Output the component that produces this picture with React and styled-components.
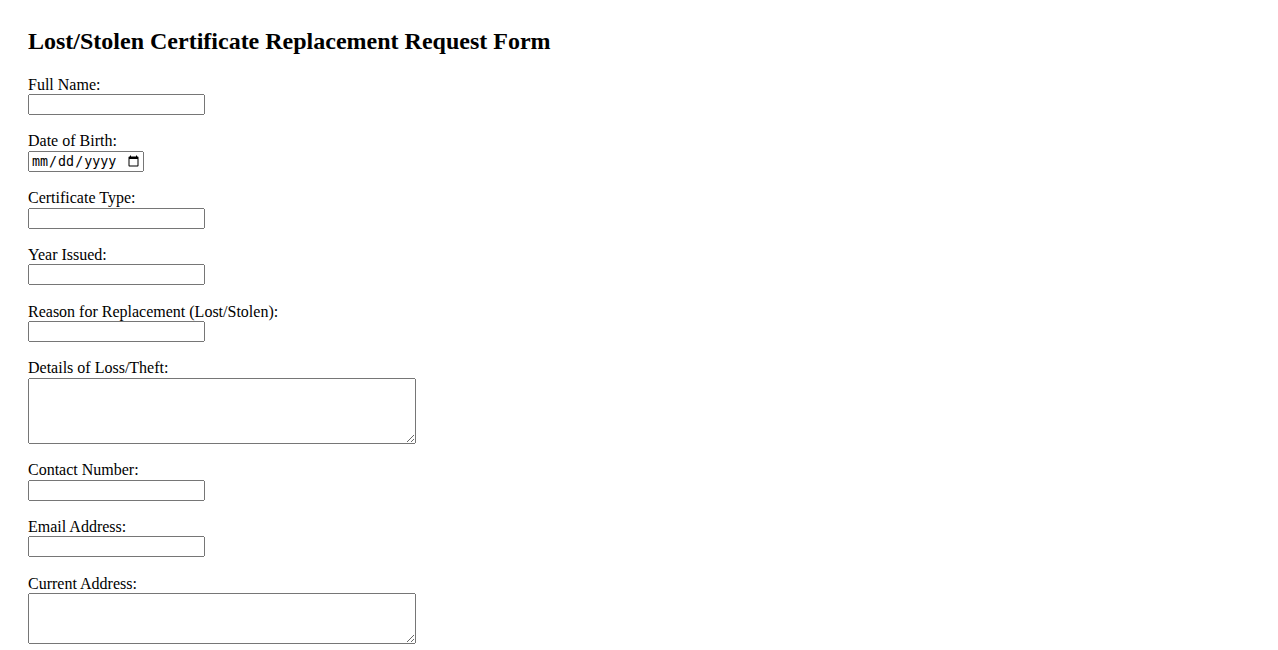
import React from 'react';
import styled, { createGlobalStyle } from 'styled-components';

const GlobalStyle = createGlobalStyle`
  body {
    margin: 0;
    background: #ffffff;
    color: #000000;
    font-family: "Liberation Serif", "Times New Roman", serif;
    font-size: 16px;
  }
`;

const Page = styled.div`
  padding: 28px;
`;

const Title = styled.h2`
  margin: 0 0 19.92px;
  font-size: 24px;
  font-weight: bold;
  line-height: 27.6px;
`;

const Form = styled.form`
  display: flex;
  flex-direction: column;
  align-items: flex-start;
`;

const Field = styled.div`
  display: flex;
  flex-direction: column;
  align-items: flex-start;
  margin-bottom: 17.4px;
`;

const Label = styled.label`
  line-height: 18.4px;
`;

const Input = styled.input`
  box-sizing: border-box;
  width: ${(p) => (p.type === 'date' ? '116px' : '177px')};
  height: 21px;
  margin: 0;
`;

const TextArea = styled.textarea`
  box-sizing: border-box;
  width: 388px;
  height: ${(p) => p.$h}px;
  margin: 0;
`;

const fields = [
  { id: 'fullName', label: 'Full Name:', type: 'text' },
  { id: 'dob', label: 'Date of Birth:', type: 'date' },
  { id: 'certType', label: 'Certificate Type:', type: 'text' },
  { id: 'yearIssued', label: 'Year Issued:', type: 'text' },
  { id: 'reason', label: 'Reason for Replacement (Lost/Stolen):', type: 'text' },
  { id: 'details', label: 'Details of Loss/Theft:', area: 66 },
  { id: 'contact', label: 'Contact Number:', type: 'tel' },
  { id: 'email', label: 'Email Address:', type: 'email' },
  { id: 'address', label: 'Current Address:', area: 51 },
];

const App = () => (
  <>
    <GlobalStyle />
    <Page>
      <Title>Lost/Stolen Certificate Replacement Request Form</Title>
      <Form onSubmit={(e) => e.preventDefault()}>
        {fields.map((f) => (
          <Field key={f.id}>
            <Label htmlFor={f.id}>{f.label}</Label>
            {f.area ? (
              <TextArea id={f.id} $h={f.area} />
            ) : (
              <Input id={f.id} type={f.type} />
            )}
          </Field>
        ))}
      </Form>
    </Page>
  </>
);

export default App;
